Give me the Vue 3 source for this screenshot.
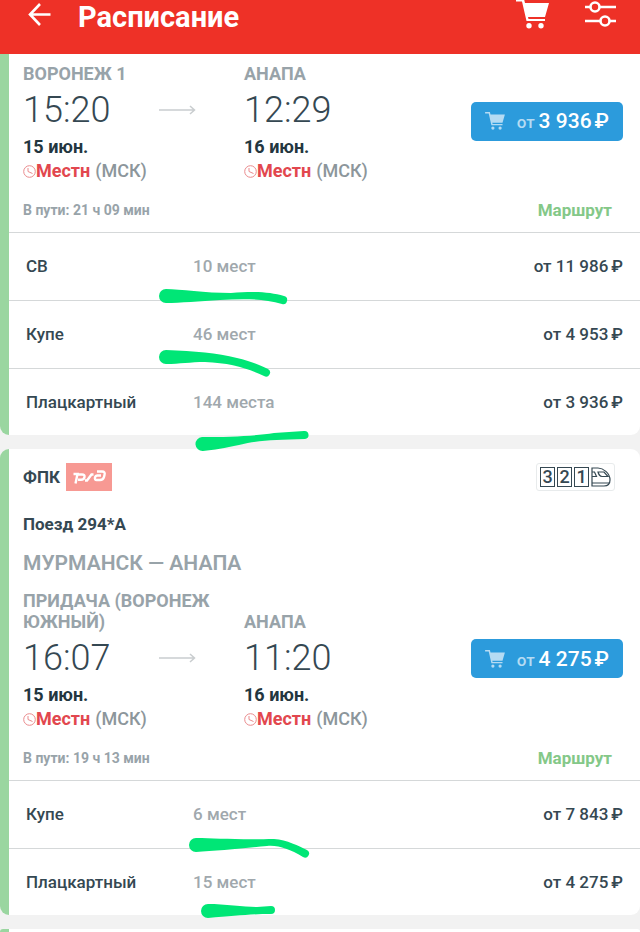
<script setup>
import { ref } from "vue";

const trains = ref([
  {
    id: 1,
    duration: "21 ч 09 мин",
    price: "3 936",
    stops: [
      { station: "ВОРОНЕЖ 1", time: "15:20", date: "15 июн." },
      { station: "АНАПА", time: "12:29", date: "16 июн." },
    ],
    seats: [
      { type: "СВ", places: "10 мест", price: "11 986" },
      { type: "Купе", places: "46 мест", price: "4 953" },
      { type: "Плацкартный", places: "144 места", price: "3 936" },
    ],
  },
  {
    id: 2,
    carrier: "ФПК",
    number: "Поезд 294*А",
    route: "МУРМАНСК — АНАПА",
    duration: "19 ч 13 мин",
    price: "4 275",
    stops: [
      { station: "ПРИДАЧА (ВОРОНЕЖ ЮЖНЫЙ)", time: "16:07", date: "15 июн." },
      { station: "АНАПА", time: "11:20", date: "16 июн." },
    ],
    seats: [
      { type: "Купе", places: "6 мест", price: "7 843" },
      { type: "Плацкартный", places: "15 мест", price: "4 275" },
    ],
  },
]);

const cartPath =
  "M0 0H8L9 4H33L29 18H12L12.5 20H29V22H10.5L6 2.5H0Z M13 24a2.7 2.7 0 1 1 0 5.4a2.7 2.7 0 1 1 0-5.4Z M25 24a2.7 2.7 0 1 1 0 5.4a2.7 2.7 0 1 1 0-5.4Z";
</script>

<template>
  <div class="page">
    <header class="topbar">
      <button class="icon-button" aria-label="Назад">
        <svg width="24" height="24" viewBox="0 0 24 24" class="stroke-icon">
          <path d="M12 2L2 12.500L12 23M2 12.500H22.500" />
        </svg>
      </button>
      <h1 class="title">Расписание</h1>
      <button class="icon-button" aria-label="Корзина">
        <svg width="33" height="30" viewBox="0 0 33 30" fill="currentColor">
          <path :d="cartPath" />
        </svg>
      </button>
      <button class="icon-button" aria-label="Фильтры">
        <svg width="32" height="28" viewBox="0 0 32 28" class="stroke-icon">
          <path d="M1 7H6.500M15.500 7H32M1 21H16.500M25.500 21H32" />
          <circle cx="11" cy="7" r="4.500" />
          <circle cx="21" cy="21" r="4.500" />
        </svg>
      </button>
    </header>

    <main class="list">
      <article
        v-for="train in trains"
        :key="train.id"
        class="card"
        :class="{ continued: !train.carrier }"
      >
        <template v-if="train.carrier">
          <div class="carrier">
            <span class="carrier-name">{{ train.carrier }}</span>
            <svg class="logo" width="46" height="28" viewBox="0 0 46 28">
              <rect width="46" height="28" fill="#f79993" />
              <g fill="none" stroke="#fff" stroke-width="2.4">
                <path d="M7.500 11H11.500L9.500 20.500M11 11.500H16Q19 11.500 18.500 14Q18 16.800 15 16.800H12" />
                <path d="M19 17.500H21L25.500 11.500H27.500" />
                <path d="M31 8.500H36Q39.500 8.500 38.500 12L38 14Q37.200 17 34 17H30.500Q28.500 17 29 14.500Q29.500 12.500 31.500 12.500H35" />
              </g>
            </svg>
            <div class="coaches">
              <span v-for="n in [3, 2, 1]" :key="n" class="coach">{{ n }}</span>
              <svg class="loco" width="20" height="20" viewBox="0 0 20 20">
                <path d="M1 1H7C12 1 19 6 19 13C19 17 17 19 13 19H1Z" />
                <path d="M1 16H18M1 9.500H5.500L3.500 5H1M7 5H13L17 9.500H11Q8 9 7 5Z" />
              </svg>
            </div>
          </div>
          <p class="number">{{ train.number }}</p>
          <h2 class="route">{{ train.route }}</h2>
        </template>

        <div class="trip">
          <div v-for="(stop, i) in train.stops" :key="i" class="stop">
            <div class="station">{{ stop.station }}</div>
            <div class="time-row">
              <time class="time">{{ stop.time }}</time>
              <svg v-if="i === 0" class="arrow" width="37" height="10" viewBox="0 0 37 10">
                <path d="M0 5H35M31 1L35.500 5L31 9" />
              </svg>
            </div>
            <div class="date">{{ stop.date }}</div>
            <div class="local">
              <svg class="clock" width="13" height="13" viewBox="0 0 13 13">
                <circle cx="6.500" cy="6.500" r="5.800" />
                <path d="M5 3V6.500L9.500 8.500" />
              </svg>
              <span class="local-label">Местн</span>
              <span class="zone">(МСК)</span>
            </div>
          </div>
          <button class="buy">
            <svg width="20" height="18" viewBox="0 0 33 30" class="buy-cart">
              <path :d="cartPath" />
            </svg>
            <span class="from">от</span>
            <span class="amount">{{ train.price }}<span class="rub">₽</span></span>
          </button>
        </div>

        <div class="summary">
          <span class="duration">В пути: {{ train.duration }}</span>
          <a href="#" class="details">Маршрут</a>
        </div>

        <table class="seats">
          <tbody>
            <tr v-for="seat in train.seats" :key="seat.type">
              <th scope="row" class="type">{{ seat.type }}</th>
              <td class="places">{{ seat.places }}</td>
              <td class="price">от {{ seat.price }}<span class="rub">₽</span></td>
            </tr>
          </tbody>
        </table>
      </article>
      <article class="card next"></article>
    </main>

    <!-- marker strokes over the seat counts -->
    <svg class="marks" width="640" height="932" viewBox="0 0 640 932" aria-hidden="true">
      <path d="M166 289C180 289 205 293 231 293C255 291 270 292 284 296A4 4 0 0 1 282 304C262 298 240 299 220 300C200 301 180 303 166 303A7 7 0 0 1 166 289Z" />
      <path d="M166 350C195 351 217 353 237 358C250 361 260 365 268 369A4 4 0 0 1 264 376C247 368 230 363 205 362C190 362 180 364 166 364A7 7 0 0 1 166 350Z" />
      <path d="M202 437C230 437 255 436 274 433L304 431A4 4 0 0 1 305 439C275 440 260 440 239 445C225 448 214 450 203 451A7 7 0 0 1 202 437Z" />
      <path d="M196 838C215 838 235 840 274 839C287 840 299 846 307 850A4 4 0 0 1 303 857C289 849 279 845 267 846C245 848 215 851 196 852A7 7 0 0 1 196 838Z" />
      <path d="M208 904C225 904 245 907 257 907L271 906A4 4 0 0 1 271 914C250 914 235 916 208 918A7 7 0 0 1 208 904Z" />
    </svg>
  </div>
</template>

<style>
body {
  margin: 0;
  background: #f2f2f2;
}
</style>

<style scoped>
.page {
  position: relative;
  display: flex;
  flex-direction: column;
  min-height: 100vh;
  font-family: Roboto, "Liberation Sans", sans-serif;
  color: #354852;
  overflow: hidden;
}

.topbar {
  display: flex;
  align-items: flex-start;
  padding: 0 24px 20px 28px;
  background: #ee3127;
  color: white;
}

.title {
  flex: 1;
  margin: 0 0 0 26px;
  font-size: 29px;
  line-height: 34px;
  font-weight: 700;
}

.icon-button {
  display: flex;
  align-items: center;
  height: 28px;
  padding: 0;
  border: none;
  background: none;
  color: inherit;
  cursor: pointer;
}

.icon-button + .icon-button {
  margin-left: 35px;
}

.stroke-icon {
  fill: none;
  stroke: currentColor;
  stroke-width: 2.6;
}

.list {
  flex: 1;
  display: flex;
  flex-direction: column;
  gap: 14px;
}

.card {
  padding-left: 9px;
  border-radius: 9px;
  background: linear-gradient(to right, #9ad6a0 9px, white 9px);
}

.card.continued {
  padding-top: 9px;
  border-radius: 0 0 9px 9px;
}

.card.next {
  flex: 1;
  border-radius: 9px 9px 0 0;
}

.carrier {
  display: flex;
  align-items: center;
  gap: 6px;
  padding: 14px 25px 0 14px;
  font-size: 17px;
  font-weight: 700;
}

.coaches {
  display: flex;
  gap: 2px;
  margin-left: auto;
  padding: 3px;
  border: 1px solid #e8ebec;
  border-radius: 3px;
}

.coach {
  box-sizing: border-box;
  width: 15px;
  height: 20px;
  border: 1px solid #354852;
  font-size: 18px;
  line-height: 18px;
  font-weight: 500;
  text-align: center;
}

.loco {
  fill: none;
  stroke: #354852;
  stroke-width: 1.2;
}

.number {
  margin: 21px 14px 0;
  font-size: 17px;
  line-height: 24px;
  font-weight: 700;
}

.route {
  margin: 15px 14px;
  font-size: 21px;
  line-height: 24px;
  font-weight: 600;
  color: #98a3a9;
}

.trip {
  display: grid;
  grid-template-columns: 221px 1fr auto;
  align-items: end;
  padding: 0 17px 0 14px;
}

.station {
  padding-right: 20px;
  font-size: 18px;
  line-height: 21px;
  font-weight: 700;
  color: #98a3a9;
}

.time-row {
  display: grid;
  grid-template-columns: 136px 1fr;
  align-items: center;
  height: 51px;
}

.time {
  padding-top: 2px;
  font-size: 36px;
  line-height: 49px;
  font-weight: 300;
}

.arrow {
  fill: none;
  stroke: #c9cdcf;
  stroke-width: 1.5;
}

.date {
  font-size: 18px;
  line-height: 24px;
  font-weight: 700;
  color: #233640;
}

.local {
  display: flex;
  align-items: center;
  font-size: 18px;
  line-height: 24px;
}

.clock {
  fill: none;
  stroke: #ea8b8d;
  stroke-width: 1;
}

.local-label {
  font-weight: 700;
  color: #e2474e;
}

.zone {
  margin-left: 5px;
  font-weight: 500;
  color: #8c969b;
}

.buy {
  display: flex;
  align-items: center;
  align-self: center;
  height: 39px;
  margin-bottom: 4px;
  padding: 0 14px;
  border: none;
  border-radius: 5px;
  background: #2c9bdc;
  color: white;
  font-family: inherit;
  cursor: pointer;
}

.buy-cart {
  fill: #b5dbf3;
}

.from {
  margin: 2px 4px 0 12px;
  font-size: 17px;
  font-weight: 500;
  color: #b5dbf3;
}

.amount {
  font-size: 21px;
  font-weight: 500;
}

.rub {
  margin-left: 3px;
}

.summary {
  display: flex;
  justify-content: space-between;
  padding: 17px 28px 12px 14px;
  line-height: 20px;
  font-weight: 700;
}

.duration {
  font-size: 14px;
  color: #98a3a9;
}

.details {
  font-size: 17px;
  color: #84c888;
  text-decoration: none;
}

.seats {
  width: 100%;
  border-spacing: 0;
  font-size: 17px;
  line-height: 22px;
}

.seats th,
.seats td {
  padding: 22px 0 23px;
  border-top: 1px solid #d5d8d9;
  font-weight: 500;
  text-align: left;
}

.seats tr:last-child th,
.seats tr:last-child td {
  padding-bottom: 22px;
}

.seats .type {
  width: 167px;
  padding-left: 17px;
}

.seats .places {
  color: #a0a8ad;
}

.seats .price {
  padding-right: 17px;
  text-align: right;
}

.marks {
  position: absolute;
  top: 0;
  left: 0;
  fill: #00e676;
  pointer-events: none;
}
</style>
